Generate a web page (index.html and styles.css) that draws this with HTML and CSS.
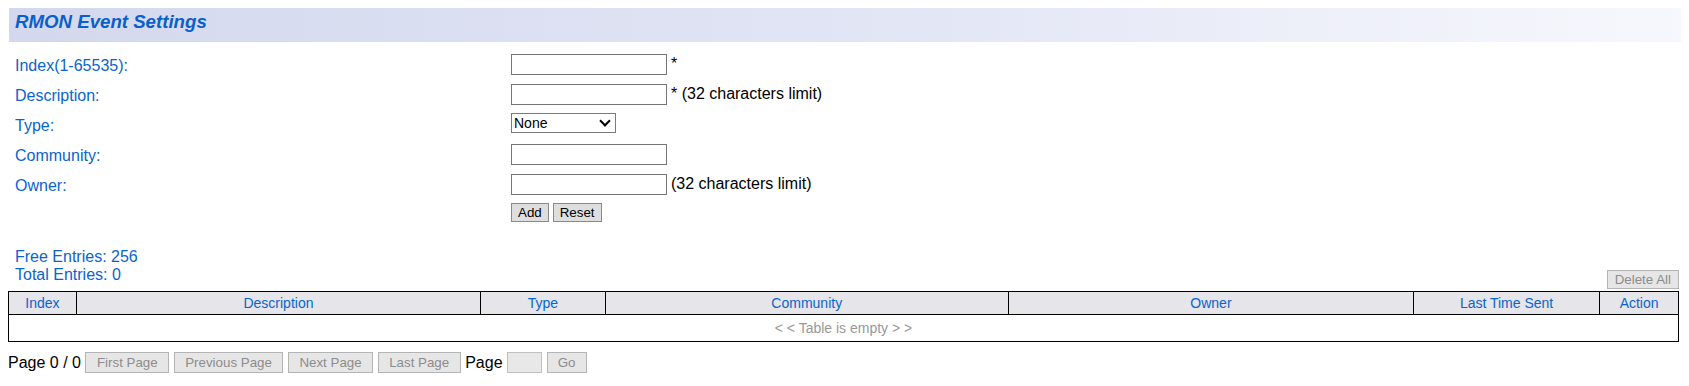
FILE: index.html
```html
<!DOCTYPE html>
<html>
  <head>
    <link rel="stylesheet" href="styles.css">
  </head>
  <body>
    <div class="page-title">
      <h1>RMON Event Settings</h1>
    </div>

    <form class="event-form">
      <div class="form-row">
        <label for="eventIndex">Index(1-65535):</label>
        <div class="field"><input type="text" id="eventIndex" class="text-input" /><span>*</span></div>
      </div>
      <div class="form-row">
        <label for="eventDesc">Description:</label>
        <div class="field"><input type="text" id="eventDesc" class="text-input" /><span>* (32 characters limit)</span></div>
      </div>
      <div class="form-row">
        <label for="eventType">Type:</label>
        <div class="field">
          <span class="select-wrap">
            <select id="eventType" class="select-input">
              <option>None</option>
              <option>Log</option>
              <option>Trap</option>
              <option>Log and Trap</option>
            </select>
          </span>
        </div>
      </div>
      <div class="form-row">
        <label for="eventCommunity">Community:</label>
        <div class="field"><input type="text" id="eventCommunity" class="text-input" /></div>
      </div>
      <div class="form-row">
        <label for="eventOwner">Owner:</label>
        <div class="field"><input type="text" id="eventOwner" class="text-input" /><span>(32 characters limit)</span></div>
      </div>
      <div class="form-row form-actions">
        <span></span>
        <div class="field">
          <button type="button" class="btn">Add</button>
          <button type="reset" class="btn">Reset</button>
        </div>
      </div>
    </form>

    <div class="entries-bar">
      <div class="entries">
        <div>Free Entries: 256</div>
        <div>Total Entries: 0</div>
      </div>
      <button type="button" class="btn btn-off btn-delete" disabled>Delete All</button>
    </div>

    <table class="event-table">
      <thead>
        <tr>
          <th class="col-index">Index</th>
          <th class="col-desc">Description</th>
          <th class="col-type">Type</th>
          <th class="col-community">Community</th>
          <th class="col-owner">Owner</th>
          <th class="col-sent">Last Time Sent</th>
          <th class="col-action">Action</th>
        </tr>
      </thead>
      <tbody>
        <tr>
          <td colspan="7" class="empty">&lt; &lt; Table is empty &gt; &gt;</td>
        </tr>
      </tbody>
    </table>

    <div class="pager">
      <span>Page 0 / 0</span>
      <button type="button" class="btn btn-off btn-page" disabled>First Page</button>
      <button type="button" class="btn btn-off btn-page" disabled>Previous Page</button>
      <button type="button" class="btn btn-off btn-page" disabled>Next Page</button>
      <button type="button" class="btn btn-off btn-page" disabled>Last Page</button>
      <span>Page</span>
      <input type="text" class="page-input" disabled />
      <button type="button" class="btn btn-off btn-go" disabled>Go</button>
    </div>
  </body>
</html>
```

FILE: styles.css
```css
body {
  font-family: "Liberation Sans", Arial, sans-serif;
  font-size: 16px;
  margin: 8px;
  background-color: #ffffff;
  color: #000000;
}

.page-title {
  margin: -1px 0 0 1px;
  width: 1674px;
  height: 35px;
  background: linear-gradient(to right, #d3d8ee, #e3e6f5 55%, #f7f8fd);
}

.page-title h1 {
  margin: 0;
  padding-left: 6px;
  font-size: 18.67px;
  font-weight: bold;
  font-style: italic;
  line-height: 29px;
  color: #0a5fcc;
}

.event-form {
  margin-top: 7px;
  padding-left: 7px;
}

.form-row {
  display: grid;
  grid-template-columns: 496px auto;
  align-items: center;
  height: 30px;
}

.form-row label {
  color: #0a64cc;
  padding-top: 3px;
}

.form-actions {
  height: 27px;
}

.field {
  display: flex;
  align-items: center;
  gap: 4px;
}

.text-input {
  width: 156px;
  height: 21px;
  box-sizing: border-box;
  border: 1px solid #767676;
  margin: 0;
  padding: 1px 3px;
  font-family: inherit;
  font-size: 13.33px;
}

.select-wrap {
  position: relative;
  display: inline-block;
  height: 20px;
  margin-top: -3px;
}

.select-input {
  appearance: none;
  display: block;
  width: 105px;
  height: 20px;
  box-sizing: border-box;
  border: 1px solid #7a7a7a;
  border-radius: 0;
  margin: 0;
  padding: 0 2px;
  background-color: #ffffff;
  font-family: inherit;
  font-size: 14px;
  color: #000000;
}

/* chevron drawn over the select */
.select-wrap::after {
  content: "";
  position: absolute;
  right: 7px;
  top: 4px;
  width: 6px;
  height: 6px;
  border-right: 2px solid #000000;
  border-bottom: 2px solid #000000;
  transform: rotate(45deg);
  pointer-events: none;
}

.btn {
  font-family: inherit;
  font-size: 13.33px;
  line-height: 15px;
  margin: 0;
  padding: 1px 6px;
  border: 1px solid #8a8a8a;
  border-radius: 0;
  background-color: #dedede;
  color: #000000;
}

.btn-off {
  border-color: #b4b4b4;
  background-color: #e6e6e6;
  color: #8c8c8c;
}

.btn-delete {
  padding: 1px 7px;
}

.btn-page {
  padding: 2px 10.5px;
}

.btn-go {
  width: 40px;
  padding: 2px 0;
}

.entries-bar {
  display: flex;
  justify-content: space-between;
  align-items: flex-end;
  width: 1671px;
  margin-top: 22px;
}

.entries {
  color: #0a64cc;
  line-height: 18px;
  padding-left: 7px;
  padding-bottom: 5px;
}

.event-table {
  width: 1671px;
  margin-top: 2px;
  border-collapse: collapse;
  border: 1px solid #000000;
  font-size: 14px;
}

.event-table th {
  height: 22px;
  padding: 0;
  border: 1px solid #000000;
  background-color: #e5e5ea;
  color: #0a64cc;
  font-weight: normal;
  text-align: center;
}

.col-index { width: 67px; }
.col-desc { width: 405px; }
.col-type { width: 124px; }
.col-community { width: 404px; }
.col-owner { width: 406px; }
.col-sent { width: 186px; }
.col-action { width: 78px; }

.event-table td.empty {
  height: 26px;
  padding: 0;
  text-align: center;
  color: #999999;
}

.pager {
  display: flex;
  align-items: center;
  gap: 4.5px;
  margin-top: 10px;
}

.page-input {
  width: 35px;
  height: 21px;
  box-sizing: border-box;
  margin: 0;
  border: 1px solid #c0c0c0;
  background-color: #e8e8e8;
}
```
